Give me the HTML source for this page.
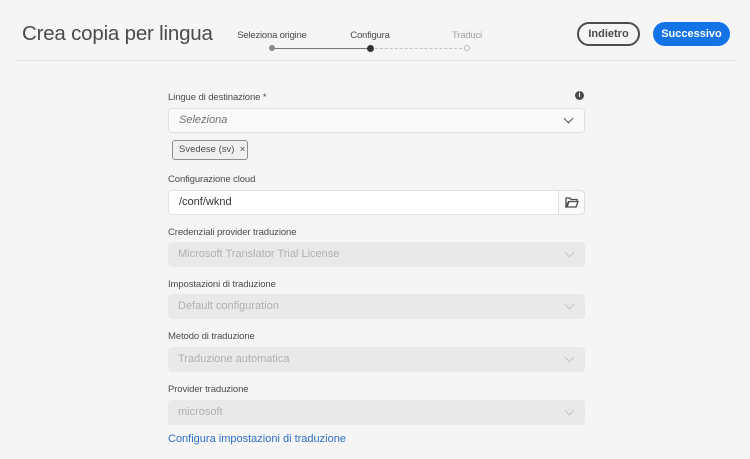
<!DOCTYPE html>
<html><head><style>
*{box-sizing:border-box;margin:0;padding:0}
body{width:750px;height:459px;background:#f5f5f5;font-family:"Liberation Sans",sans-serif;position:relative;overflow:hidden;color:#323232}
.a{position:absolute}
.title{left:22px;top:22px;font-size:20.5px;color:#4b4b4b;font-weight:300;letter-spacing:-0.2px;white-space:nowrap}
.step{font-size:9.5px;color:#4b4b4b;top:30px;transform:translateX(-50%);white-space:nowrap;letter-spacing:-0.2px}
.hr{left:15px;top:60px;width:720px;height:1px;background:#e2e2e2}
.btn{top:22px;height:24px;border-radius:12px;font-size:11px;font-weight:bold;text-align:center;line-height:20px;white-space:nowrap}
.lbl{left:168px;font-size:9.5px;color:#4b4b4b;letter-spacing:-0.1px}
.fld{left:168px;width:417px;height:25px;border-radius:4px;font-size:11px;padding-left:10px;line-height:25px;white-space:nowrap}
.dis{background:#e9e9e9;color:#b0b0b0}
.chev{position:absolute;right:12px;width:7px;height:7px;border-right:1.5px solid #555;border-bottom:1.5px solid #555;transform:rotate(45deg);top:6px}
.dis .chev{border-color:#c6c6c6;top:7px}
</style></head><body>
<div class="a title">Crea copia per lingua</div>
<div class="a step" style="left:272px">Seleziona origine</div>
<div class="a step" style="left:370px">Configura</div>
<div class="a step" style="left:467px;color:#a0a0a0">Traduci</div>
<div class="a" style="left:272px;top:47.5px;width:98px;height:1.5px;background:#777"></div>
<div class="a" style="left:370px;top:48px;width:97px;border-top:1px dashed #c4c4c4"></div>
<div class="a" style="left:269px;top:45px;width:6px;height:6px;border-radius:50%;background:#8a8a8a"></div>
<div class="a" style="left:367px;top:45px;width:7px;height:7px;border-radius:50%;background:#333"></div>
<div class="a" style="left:464px;top:45px;width:6px;height:6px;border-radius:50%;border:1px solid #bbb;background:#f5f5f5"></div>
<div class="a btn" style="left:577px;width:63px;border:2px solid #4b4b4b;color:#4b4b4b">Indietro</div>
<div class="a btn" style="left:653px;width:77px;background:#1473e6;color:#fff;line-height:24px">Successivo</div>
<div class="a hr"></div>

<div class="a lbl" style="top:92px">Lingue di destinazione *</div>
<div class="a" style="left:575px;top:91px;width:9px;height:9px;border-radius:50%;background:#4b4b4b;color:#fff;font-size:7px;text-align:center;line-height:9px;font-weight:bold">i</div>
<div class="a fld" style="top:108px;background:#fafafa;border:1px solid #e1e1e1;color:#707070;font-style:italic;line-height:23px">Seleziona<span class="chev"></span></div>
<div class="a" style="left:172px;top:140px;width:76px;height:20px;border:1px solid #8e8e8e;border-radius:3px;background:#f0f0f0;font-size:9.5px;line-height:18px;padding-left:6px;color:#4b4b4b;white-space:nowrap">Svedese (sv) &nbsp;×</div>

<div class="a lbl" style="top:174px">Configurazione cloud</div>
<div class="a fld" style="top:190px;background:#fff;border:1px solid #e1e1e1;line-height:23px;color:#323232">/conf/wknd</div>
<div class="a" style="left:558px;top:190px;width:27px;height:25px;border:1px solid #e1e1e1;background:#fafafa;border-radius:0 4px 4px 0"></div>
<svg class="a" style="left:565px;top:197px" width="14" height="11" viewBox="0 0 14 11"><path d="M1 1h4l1 1.5h6v2H4L2 10H1z M1 10l2.5-5.5H13L11 10z" fill="none" stroke="#4b4b4b" stroke-width="1.3"/></svg>

<div class="a lbl" style="top:227px">Credenziali provider traduzione</div>
<div class="a fld dis" style="top:242px">Microsoft Translator Trial License<span class="chev"></span></div>
<div class="a lbl" style="top:279px">Impostazioni di traduzione</div>
<div class="a fld dis" style="top:294px">Default configuration<span class="chev"></span></div>
<div class="a lbl" style="top:331px">Metodo di traduzione</div>
<div class="a fld dis" style="top:347px">Traduzione automatica<span class="chev"></span></div>
<div class="a lbl" style="top:384px">Provider traduzione</div>
<div class="a fld dis" style="top:400px">microsoft<span class="chev"></span></div>
<div class="a" style="left:168px;top:433px;font-size:11px;color:#2c6fc9">Configura impostazioni di traduzione</div>
</body></html>
